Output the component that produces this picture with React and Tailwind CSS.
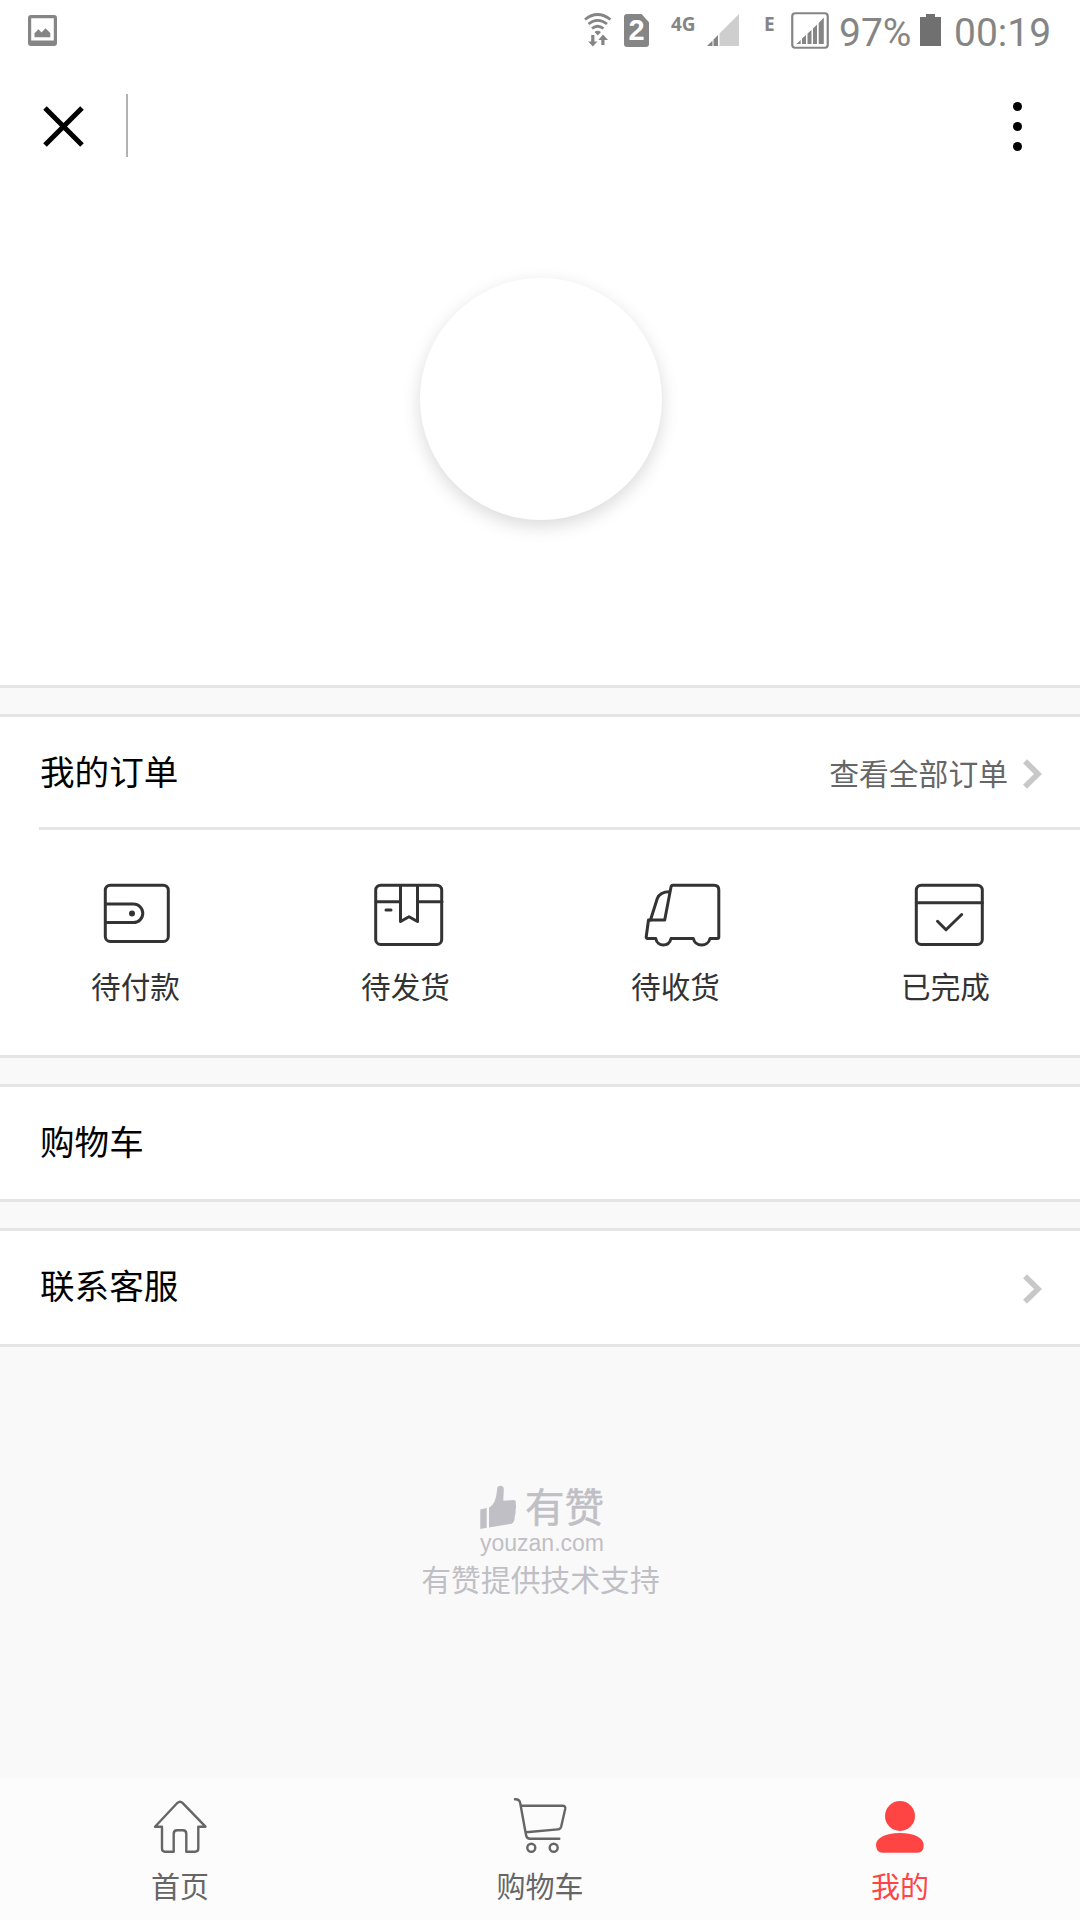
const STROKE = { fill: 'none', stroke: '#333333', strokeWidth: 3, strokeLinejoin: 'round', strokeLinecap: 'round' };
const NAV_STROKE = { fill: 'none', stroke: '#666666', strokeWidth: 2.4, strokeLinejoin: 'round', strokeLinecap: 'round' };

function Chevron({ className = '' }) {
  return (
    <svg className={`h-[30px] w-5 shrink-0 ${className}`} viewBox="0 0 20 30" fill="none" stroke="#c8c8c8" strokeWidth="5.6">
      <path d="M2 2.200L15 15L2 27.800" />
    </svg>
  );
}

function StatusBar() {
  return (
    <div className="flex h-[60px] items-start pl-7 font-['Roboto',sans-serif] text-[#858585]">
      <svg className="mt-[15px] h-[31px] w-[29px]" viewBox="0 0 29 31" fill="currentColor">
        <path fillRule="evenodd" d="M3 0H26A3 3 0 0 1 29 3V28A3 3 0 0 1 26 31H3A3 3 0 0 1 0 28V3A3 3 0 0 1 3 0ZM3.2 3.2V25.6H25.8V3.2Z" />
        <path d="M6.5 22.3V18.3L10.5 14.3L13.5 17.5L17.5 13.2L22.3 18V22.3Z" />
      </svg>
      <svg className="mt-[13px] ml-[527px] h-[34px] w-[28px]" viewBox="0 0 28 34" fill="none" stroke="currentColor" strokeWidth="2.8">
        <path d="M1 6.5Q13.500 -3.500 26.500 6.500M4.500 11Q13.500 3.800 23 11M8 15.500Q13.500 11 19.500 15.500" />
        <path d="M10.500 19Q13.500 16.500 17 19L13.800 22.500Z" fill="currentColor" stroke="none" />
        <path d="M7.200 22H10.400V28.500H13.500L8.800 33.500L4.200 28.500H7.200ZM17.300 32H20.500V27H24L19 21.500L14.300 27H17.300Z" fill="currentColor" stroke="none" />
      </svg>
      <div className="mt-[14px] ml-[12px] flex h-[33px] w-[25px] items-center justify-center rounded-[3px] bg-[#858585] font-['Liberation_Sans',sans-serif] text-[29px] leading-none font-bold text-white [clip-path:polygon(0_0,70%_0,100%_25%,100%_100%,0_100%)]">2</div>
      <span className="mt-[14px] ml-[22px] w-[26px] font-['Noto_Sans',sans-serif] text-[19px] leading-5 font-bold">4G</span>
      <svg className="mt-[14px] ml-[10px] h-8 w-8" viewBox="0 0 32 32" fill="currentColor">
        <path d="M12.500 19.500L32 0V32H12.500Z" fill="#cecece" />
        <path d="M0 32L5.500 26.500V32ZM6.500 25.500L11 21V32H6.500Z" />
      </svg>
      <span className="mt-[14px] ml-[25px] w-[12px] font-['Noto_Sans',sans-serif] text-[19px] leading-5 font-bold">E</span>
      <svg className="mt-[12px] ml-[15px] h-[37px] w-[38px]" viewBox="0 0 38 37" fill="currentColor">
        <rect x="1.250" y="1.250" width="35.500" height="34.500" rx="3" fill="none" stroke="currentColor" strokeWidth="2.200" />
        <path d="M5.500 32L9.700 28V32ZM11 26.500L15 23V32H11ZM16.500 21.500L20.500 18V32H16.500ZM22 16.500L26 12.500V32H22ZM27.700 11L32.800 5.500V32H27.700Z" />
      </svg>
      <span className="mt-[13px] ml-[10px] w-[72px] text-[39px] leading-10">97%</span>
      <svg className="mt-[14px] ml-[9px] h-8 w-[21px]" viewBox="0 0 21 32" fill="#707070">
        <path d="M6 0H15V3H21V32H0V3H6Z" />
      </svg>
      <span className="mt-[13px] ml-[13px] text-[39px] leading-10">00:19</span>
    </div>
  );
}

function TitleBar() {
  return (
    <div className="flex h-[131px] items-center pr-[58.5px] pl-[43px]">
      <svg className="mt-[2px] h-[42px] w-[42px]" viewBox="0 0 42 42" fill="none" stroke="#000" strokeWidth="5">
        <path d="M2 2L39 39M39 2L2 39" />
      </svg>
      <div className="ml-[41px] h-[63px] w-[2px] bg-[#b2b2b2]" />
      <div className="mt-px ml-auto flex flex-col gap-[11px]">
        <i className="size-[9px] rounded-full bg-black" />
        <i className="size-[9px] rounded-full bg-black" />
        <i className="size-[9px] rounded-full bg-black" />
      </div>
    </div>
  );
}

const ORDERS = [
  {
    label: '待付款',
    icon: (
      <>
        <rect x="15.300" y="5.200" width="63" height="56.300" rx="5" />
        <path d="M15.500 24H43.500A9.300 9.300 0 0 1 43.500 42.600H15.500" />
        <circle cx="42" cy="33.400" r="3" fill="#333333" stroke="none" />
      </>
    ),
  },
  {
    label: '待发货',
    icon: (
      <>
        <rect x="15.700" y="5.200" width="66" height="59.300" rx="5" />
        <path d="M16 21.700H40.500M57.500 21.700H82M40.500 5.500V41.500L49 36.800L57.500 41.500V5.500M26 30H31" />
      </>
    ),
  },
  {
    label: '待收货',
    icon: (
      <>
        <path d="M41 7Q41.300 5.200 43 5.200H84Q88.800 5.200 88.800 10V57Q88.800 58.500 87.300 58.500H80C78 67.200 65.500 67.200 63.300 58.500H41C39 67.200 27.500 67.200 25.700 58.500H17.500Q16 58.500 16.200 57L18.500 40H34.700L41 7" />
        <path d="M20.500 40L27.300 18.500Q30 11.700 39.500 11.700" />
      </>
    ),
  },
  {
    label: '已完成',
    icon: (
      <>
        <rect x="16.300" y="5.200" width="66" height="59.300" rx="5" />
        <path d="M16.300 22.700H82.300M37.500 41.300L46 49.800L61.700 34.500" />
      </>
    ),
  },
];

const TABS = [
  {
    label: '首页',
    icon: (
      <path d="M29.500 8.800Q32 6.500 34.500 8.800L57.500 32.700H50.300V54.500Q50.300 57.700 47 57.700H38.300V40Q38.300 36.300 35 36.300H29Q25.700 36.300 25.700 40V57.700H17Q14 57.700 14 54.500V32.700H7Z" />
    ),
  },
  {
    label: '购物车',
    icon: (
      <>
        <path d="M7 5.300Q11.500 5 12.200 9L18 41Q18.500 44.700 22 44.700H51.300M13.300 11.700H54.500Q57.800 11.700 57.200 15L53.200 32.500Q52.500 35.200 50 35.400L18 38.200" />
        <circle cx="23.300" cy="53.700" r="4" />
        <circle cx="45.700" cy="53.700" r="4" />
      </>
    ),
  },
  {
    label: '我的',
    active: true,
    icon: (
      <g fill="#ff4444" stroke="none">
        <circle cx="32" cy="22" r="15" />
        <path d="M8 51C8 44 17 39 32 39S55.700 44 55.700 51Q56 58.700 49 58.700H15Q8 58.700 8 51Z" />
      </g>
    ),
  },
];

export default function App() {
  return (
    <div className="flex h-[1920px] w-[1080px] flex-col overflow-hidden bg-[#f9f9f9] font-['Noto_Sans_CJK_SC',sans-serif]">
      <header className="h-[688px] shrink-0 border-b-[3px] border-[#e5e5e5] bg-white">
        <StatusBar />
        <TitleBar />
        <div className="mt-[87px] ml-[420px] size-[242px] rounded-full bg-white shadow-[0_6px_18px_rgba(0,0,0,0.15)]" />
      </header>

      <section className="mt-[26px] h-[344px] shrink-0 border-y-[3px] border-[#e5e5e5] bg-white">
        <div className="ml-[39px] flex h-[113px] items-center border-b-[3px] border-[#e5e5e5] pr-[37px]">
          <h2 className="mb-[4px] ml-px text-[34.6px] leading-none text-black">我的订单</h2>
          <span className="mt-px ml-auto text-[29.8px] leading-none text-[#666666]">查看全部订单</span>
          <Chevron className="mt-[4px] ml-[15px]" />
        </div>
        <div className="grid grid-cols-4 pt-[50px]">
          {ORDERS.map((o) => (
            <div key={o.label} className="flex flex-col items-center">
              <svg className="h-[72px] w-24" viewBox="-3 0 96 72" {...STROKE}>{o.icon}</svg>
              <span className="mt-[19px] ml-px text-[29.6px] leading-none text-[#333333]">{o.label}</span>
            </div>
          ))}
        </div>
      </section>

      <section className="mt-[26px] flex h-[118px] shrink-0 items-center border-y-[3px] border-[#e5e5e5] bg-white pl-10">
        <span className="mb-[6px] text-[34.6px] leading-none text-black">购物车</span>
      </section>

      <section className="mt-[26px] flex h-[119px] shrink-0 items-center justify-between border-y-[3px] border-[#e5e5e5] bg-white pr-[37px] pl-10">
        <span className="mb-[6px] text-[34.6px] leading-none text-black">联系客服</span>
        <Chevron className="mt-[2px]" />
      </section>

      <footer className="flex flex-1 flex-col items-center pt-[137px] text-[#c0bfc5]">
        <div className="ml-[2px] flex h-[46px] w-[126px] items-start">
          <svg className="h-[46px] w-10 shrink-0" viewBox="0 0 40 46" fill="currentColor">
            <path d="M2.300 25.500L8.700 24V43.700L2.300 45ZM11 23.500C15 21.500 17.500 17 18.500 10L19.300 4C20 .8 25.700 1 25.800 5L25.300 16.700L36 16Q38.500 16.500 37.700 20Q38.500 23 37.500 26Q38 29 36.800 32Q37 38 33.500 39.700L11 43.500Z" />
          </svg>
          <span className="-mt-px ml-[7px] text-[39.5px] leading-[44px] whitespace-nowrap [-webkit-text-stroke:0.5px_currentColor]">有赞</span>
        </div>
        <span className="mt-[2px] ml-[4px] font-['Liberation_Sans',sans-serif] text-[23px] leading-[22px]">youzan.com</span>
        <span className="mt-[7px] ml-px text-[29.8px] leading-[34px]">有赞提供技术支持</span>
      </footer>

      <nav className="grid h-[142px] shrink-0 grid-cols-3 bg-[#fcfcfc] pt-4">
        {TABS.map((t) => (
          <div key={t.label} className={`flex flex-col items-center ${t.active ? 'text-[#ff4444]' : 'text-[#666666]'}`}>
            <svg className="size-16" viewBox="0 0 64 64" {...NAV_STROKE}>{t.icon}</svg>
            <span className="mt-[13px] text-[29px] leading-none">{t.label}</span>
          </div>
        ))}
      </nav>
    </div>
  );
}
